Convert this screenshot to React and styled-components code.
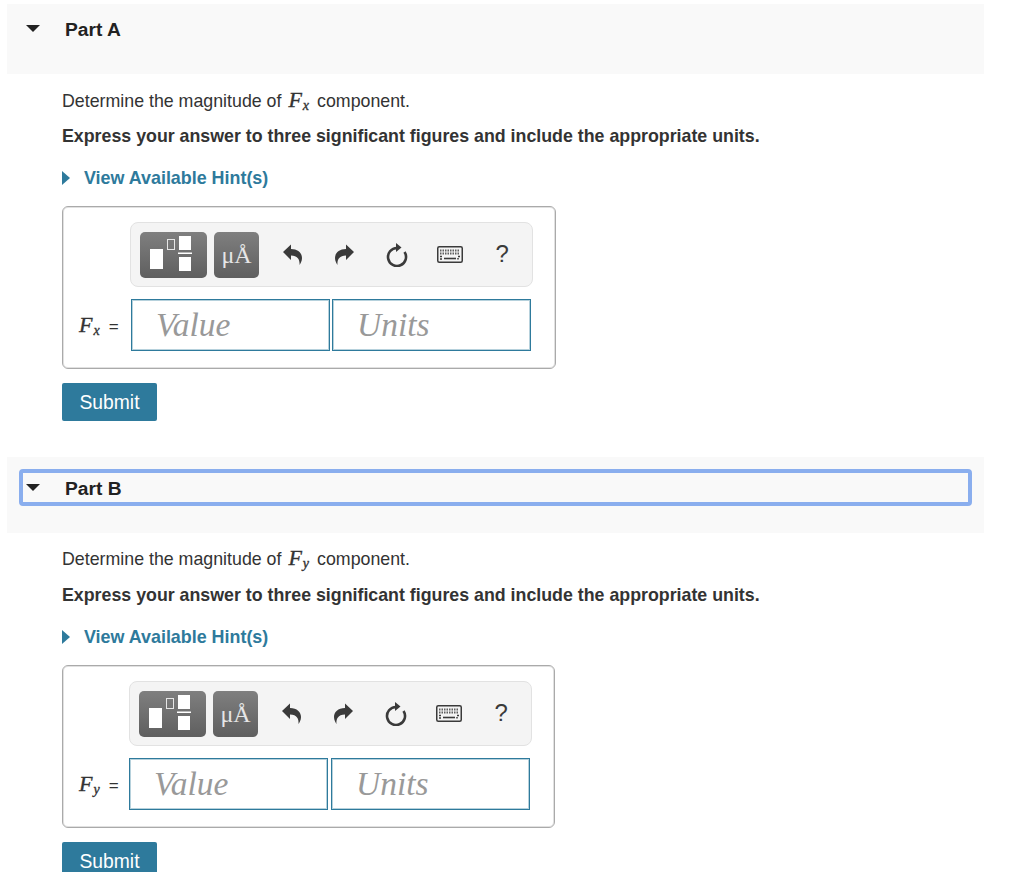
import styled, { createGlobalStyle } from "styled-components"

const Global = createGlobalStyle`
html, body {
  margin: 0;
  overflow: hidden;
  background: #fff;
}
body {
  font-family: "Liberation Sans", Arial, sans-serif;
  color: #333;
}
input::placeholder {
  color: #999;
  opacity: 1;
}
`

const Page = styled.div`
  width: 977px;
  height: 868px;
  overflow: hidden;
  padding: 4px 0 0 7px;
`

const Section = styled.section`
  margin-bottom: 36px;
`

const Header = styled.div`
  background: #f9f9f9;
  padding: ${(p) => p.$top}px 12.5px 27px 12px;
`

const Toggle = styled.div`
  height: 37px;
  box-sizing: border-box;
  display: flex;
  align-items: center;
  gap: 25px;
  padding-left: 3px;
  border: 4px solid ${(p) => (p.$focus ? "#8aaeee" : "transparent")};
  border-radius: 4px;
`

const DownArrow = styled.span`
  width: 0;
  height: 0;
  border-left: 7px solid transparent;
  border-right: 7px solid transparent;
  border-top: 7px solid #222;
`

const PartTitle = styled.h2`
  margin: 0;
  padding-top: 2px;
  font-size: 19.2px;
  font-weight: 700;
  color: #222;
`

const Body = styled.div`
  padding: ${(p) => p.$top}px 0 0 55px;
`

const Question = styled.p`
  margin: 0;
  height: 20px;
  line-height: 20px;
  font-size: 17.8px;
  display: flex;
  align-items: baseline;
  white-space: pre;
`

const Instruction = styled.p`
  margin: ${(p) => p.$gap}px 0 0;
  height: 20px;
  line-height: 20px;
  font-size: 17.8px;
  font-weight: 700;
  white-space: nowrap;
`

const Hint = styled.a`
  margin-top: ${(p) => p.$gap}px;
  height: 20px;
  display: flex;
  align-items: center;
  gap: 14px;
  font-size: 17.9px;
  font-weight: 700;
  color: #2e7a9c;
  cursor: pointer;
`

const HintArrow = styled.span`
  width: 0;
  height: 0;
  border-top: 7px solid transparent;
  border-bottom: 7px solid transparent;
  border-left: 8px solid #2e7a9c;
`

const Math = styled.span`
  margin: ${(p) => (p.$inline ? "0 8px 0 2px" : "0")};
  font-family: "Liberation Serif", "Times New Roman", serif;
  font-style: italic;
  font-size: 22px;
  letter-spacing: 1px;
  -webkit-text-stroke: 0.35px #333;
  color: #333;
  sub {
    font-size: 14px;
    line-height: 0;
    vertical-align: -3px;
    letter-spacing: 0;
  }
`

const AnswerBox = styled.div`
  width: ${(p) => p.$width}px;
  box-sizing: border-box;
  margin-top: 18px;
  padding: 15px 0 17px;
  border: 1px solid #aaa;
  border-radius: 6px;
  background: #fff;
  box-shadow: inset 0 0 0 1px rgba(170, 170, 170, 0.35);
`

const Toolbar = styled.div`
  width: 403px;
  height: 65px;
  box-sizing: border-box;
  margin-left: ${(p) => p.$left}px;
  padding-left: 9px;
  display: flex;
  align-items: center;
  background: #f4f4f4;
  border: 1px solid #e2e2e2;
  border-radius: 8px;
`

const ToolButton = styled.button`
  width: ${(p) => p.$width}px;
  height: 46px;
  flex: none;
  margin-right: ${(p) => p.$gap}px;
  padding: 0;
  border: none;
  border-radius: 5px;
  background: linear-gradient(#7f7f7f, #5f5f5f);
  color: #e6e6e6;
  font-family: "Liberation Serif", serif;
  font-size: 24px;
  line-height: 1;
  display: flex;
  align-items: center;
  justify-content: center;
`

const ToolIcon = styled.span`
  width: 52.5px;
  flex: none;
  display: flex;
  align-items: center;
  justify-content: center;
  color: #3a3a3a;
  font-size: 24px;
  svg {
    display: block;
  }
`

const HelpMark = styled.span`
  padding-bottom: 2px;
`

const Flip = styled.svg`
  transform: ${(p) => (p.$flip ? "scaleX(-1)" : "none")};
`

const InputRow = styled.div`
  margin-top: 12px;
  display: flex;
  align-items: center;
`

const Label = styled.div`
  width: ${(p) => p.$width}px;
  box-sizing: border-box;
  flex: none;
  padding-left: 16px;
  display: flex;
  align-items: baseline;
  gap: 9px;
  font-size: 17px;
`

const Field = styled.input`
  width: 199px;
  height: 52px;
  box-sizing: border-box;
  margin-right: ${(p) => p.$gap}px;
  padding: 0 0 0 24px;
  border: 1px solid #2e7a9c;
  border-radius: 0;
  background: #fff;
  box-shadow: inset 0 0 0 1px rgba(46, 122, 156, 0.35);
  font-family: "Liberation Serif", "Times New Roman", serif;
  font-style: italic;
  font-size: 33.5px;
  outline: none;
`

const Submit = styled.button`
  display: block;
  width: 95px;
  height: 38px;
  margin-top: 14px;
  padding: 2px 0 0;
  border: none;
  border-radius: 2px;
  background: #2e7a9c;
  color: #fff;
  font-family: "Liberation Sans", Arial, sans-serif;
  font-size: 19.3px;
  cursor: pointer;
`

const ReplyIcon = ({ flip }) => (
  <Flip $flip={flip} width="19" height="21" viewBox="0 0 19 21" fill="currentColor">
    <path d="M0 8 8 0.5V5C15 5 19 9 19 14 19 17 17.5 19.5 16.5 21 17 16 15 11.5 8 11.5V16Z" />
  </Flip>
)

const RotateIcon = () => (
  <svg width="22" height="24" viewBox="0 0 22 24" fill="none" stroke="currentColor">
    <path d="M11 5A9 9 0 1 0 18.5 9" strokeWidth="2.6" />
    <path d="M10 0V9L15.5 4.5Z" fill="currentColor" stroke="none" />
  </svg>
)

const KeyboardIcon = () => (
  <svg width="26" height="17" viewBox="0 0 26 17" fill="none" stroke="currentColor">
    <rect x="0.75" y="0.75" width="24.5" height="15.5" rx="1.5" strokeWidth="1.5" />
    <path d="M3 4.5H23M3 7.5H23" strokeWidth="2" strokeDasharray="1.5 1" opacity="0.8" />
    <path d="M3 10.5H5M21 10.5H23M21 12V13.5M3 13H5" strokeWidth="1.5" />
    <path d="M7 12.5H19" strokeWidth="1.6" />
  </svg>
)

const TemplateIcon = () => (
  <svg width="67" height="46" viewBox="0 0 67 46">
    <rect x="10" y="17" width="13" height="20" fill="#fff" />
    <rect x="27.5" y="7.5" width="7" height="10" fill="none" stroke="#e6e6e6" />
    <rect x="39" y="4" width="12" height="14" fill="#fff" />
    <rect x="38" y="20.5" width="14" height="1.5" fill="#fff" />
    <rect x="39" y="25" width="12" height="14" fill="#fff" />
  </svg>
)

const Part = ({ title, variable, focus, headerTop, bodyTop, boldGap, hintGap, boxWidth, toolbarLeft, labelWidth, fieldGap }) => (
  <Section>
    <Header $top={headerTop}>
      <Toggle $focus={focus}>
        <DownArrow />
        <PartTitle>{title}</PartTitle>
      </Toggle>
    </Header>
    <Body $top={bodyTop}>
      <Question>
        Determine the magnitude of <Math $inline>F<sub>{variable}</sub></Math>component.
      </Question>
      <Instruction $gap={boldGap}>Express your answer to three significant figures and include the appropriate units.</Instruction>
      <Hint $gap={hintGap}>
        <HintArrow />
        View Available Hint(s)
      </Hint>
      <AnswerBox $width={boxWidth}>
        <Toolbar $left={toolbarLeft}>
          <ToolButton $width={67} $gap={7}><TemplateIcon /></ToolButton>
          <ToolButton $width={45} $gap={7}>μÅ</ToolButton>
          <ToolIcon><ReplyIcon /></ToolIcon>
          <ToolIcon><ReplyIcon flip /></ToolIcon>
          <ToolIcon><RotateIcon /></ToolIcon>
          <ToolIcon><KeyboardIcon /></ToolIcon>
          <ToolIcon><HelpMark>?</HelpMark></ToolIcon>
        </Toolbar>
        <InputRow>
          <Label $width={labelWidth}>
            <Math>F<sub>{variable}</sub></Math> =
          </Label>
          <Field placeholder="Value" $gap={fieldGap} />
          <Field placeholder="Units" $gap={0} />
        </InputRow>
      </AnswerBox>
      <Submit>Submit</Submit>
    </Body>
  </Section>
)

const App = () => (
  <>
    <Global />
    <Page>
      <Part title="Part A" variable="x" headerTop={6} bodyTop={16} boldGap={16} hintGap={22} boxWidth={494} toolbarLeft={67} labelWidth={68} fieldGap={2} />
      <Part title="Part B" variable="y" focus headerTop={12} bodyTop={15} boldGap={17} hintGap={22} boxWidth={493} toolbarLeft={66} labelWidth={66} fieldGap={3} />
    </Page>
  </>
)

export default App
